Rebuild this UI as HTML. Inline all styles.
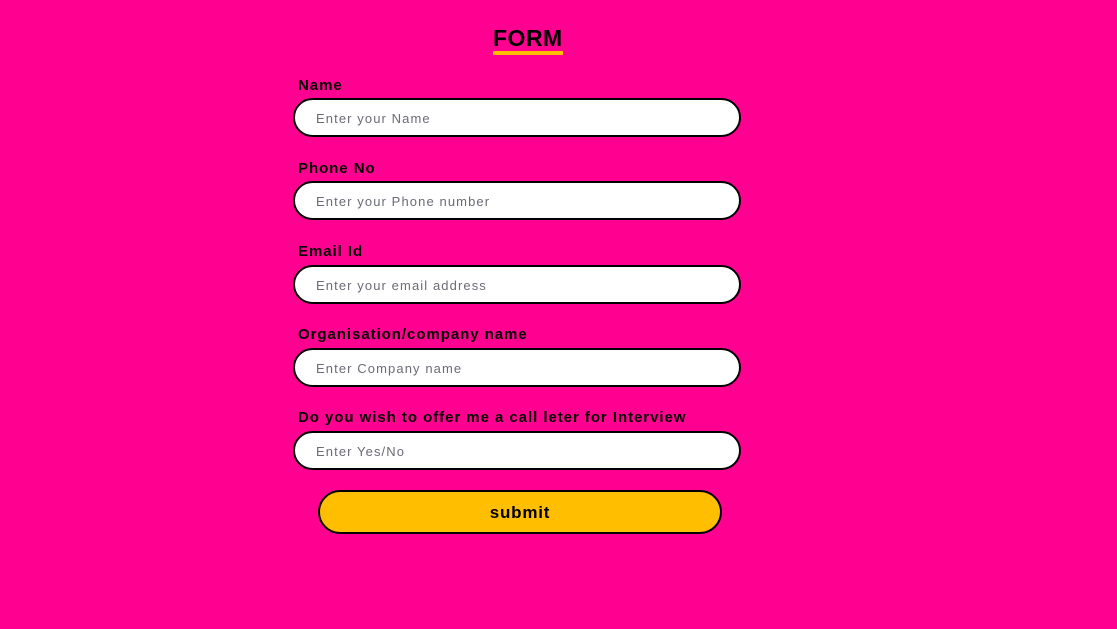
<!DOCTYPE html>
<html><head><meta charset="utf-8"><style>
html,body{margin:0;padding:0;width:1117px;height:629px;background:#ff0090;overflow:hidden;font-family:"Liberation Sans",Arial,sans-serif;}
.t{position:absolute;left:493px;top:24px;font-size:23px;font-weight:bold;color:#000;letter-spacing:0.5px;line-height:28px;}
.u{position:absolute;left:493px;top:51px;width:70px;height:4px;background:#ffbf00;}
.l{position:absolute;left:298px;font-size:15px;font-weight:bold;color:#000;letter-spacing:0.95px;line-height:18px;}
.i{position:absolute;left:293px;width:444px;height:35px;border:2px solid #000;border-radius:20px;background:#fff;box-sizing:content-box;}
.i span{position:absolute;left:21px;top:11px;font-size:13px;color:#6b6b78;letter-spacing:1.1px;line-height:15px;}
.b{position:absolute;left:318px;top:490px;width:400px;height:40px;border:2px solid #000;border-radius:22px;background:#ffbf00;text-align:center;line-height:42px;font-size:17px;font-weight:bold;letter-spacing:0.8px;}
</style></head><body>
<div class="t">FORM</div><div class="u"></div>
<div class="l" style="top:77px">Name</div>
<div class="i" style="top:98px"><span>Enter your Name</span></div>
<div class="l" style="top:160px">Phone No</div>
<div class="i" style="top:181px"><span>Enter your Phone number</span></div>
<div class="l" style="top:243px">Email Id</div>
<div class="i" style="top:265px"><span>Enter your email address</span></div>
<div class="l" style="top:326px">Organisation/company name</div>
<div class="i" style="top:348px"><span>Enter Company name</span></div>
<div class="l" style="top:409px">Do you wish to offer me a call leter for Interview</div>
<div class="i" style="top:431px"><span>Enter Yes/No</span></div>
<div class="b">submit</div>
</body></html>
